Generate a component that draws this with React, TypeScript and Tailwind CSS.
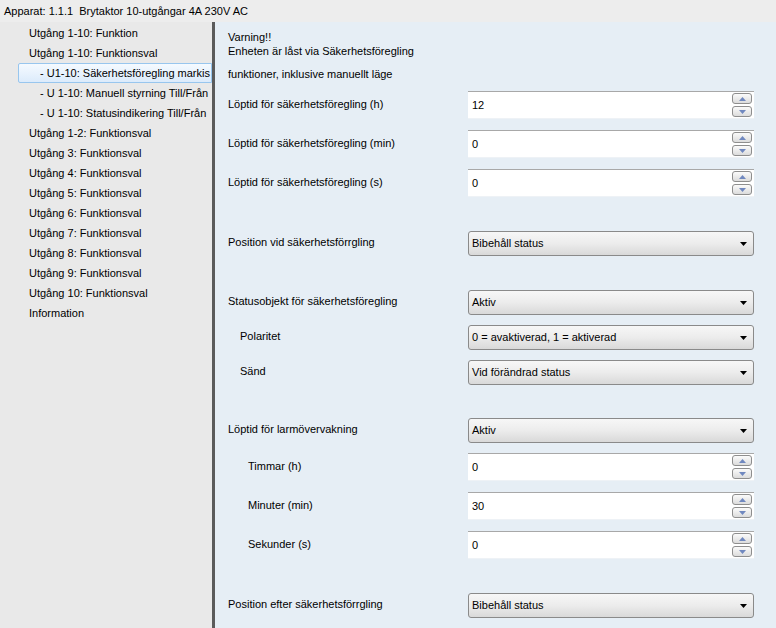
import React from "react";

const font = { fontFamily: '"Liberation Sans", Arial, sans-serif' };

function Spinner() {
  return (
    <div className="flex flex-col gap-[2px] mr-[1px]">
      {[0, 1].map((i) => (
        <div
          key={i}
          className="w-[20px] h-[11px] rounded-[3px] border border-[#8e8e8e] bg-gradient-to-b from-[#fbfbfb] to-[#dcdcdc] flex items-center justify-center"
        >
          <svg width="7" height="4" viewBox="0 0 7 4">
            {i === 0 ? (
              <polygon points="0,4 7,4 3.5,0" fill="#7088bf" />
            ) : (
              <polygon points="0,0 7,0 3.5,4" fill="#7088bf" />
            )}
          </svg>
        </div>
      ))}
    </div>
  );
}

function NumInput({ value }: { value: string }) {
  return (
    <div className="w-[286px] h-[28px] bg-white border-t border-t-[#a8a8a8] border-b border-b-[#eef2f6] flex items-center justify-between pl-[4px] pr-[1px]">
      <span className="text-[11px] text-black pt-[1px]">{value}</span>
      <Spinner />
    </div>
  );
}

function Select({ value }: { value: string }) {
  return (
    <div className="w-[286px] h-[25px] rounded-[3px] border border-[#8a8a8a] bg-gradient-to-b from-[#f7f7f7] via-[#ececec] to-[#d9d9d9] flex items-center justify-between pl-[3px] pr-[6px]">
      <span className="text-[11px] text-black">{value}</span>
      <svg width="7" height="4" viewBox="0 0 7 4">
        <polygon points="0,0 7,0 3.5,4" fill="#000" />
      </svg>
    </div>
  );
}

function Row({
  label,
  indent,
  children,
  mt,
}: {
  label: string;
  indent: string;
  children: React.ReactNode;
  mt: string;
}) {
  return (
    <div className={`flex items-center justify-between pr-[22px] ${mt}`}>
      <span className={`text-[11px] text-black pb-[2px] ${indent}`}>{label}</span>
      {children}
    </div>
  );
}

const treeItems: { text: string; sub?: boolean; selected?: boolean }[] = [
  { text: "Utgång 1-10: Funktion" },
  { text: "Utgång 1-10: Funktionsval" },
  { text: "- U1-10: Säkerhetsföregling markis", sub: true, selected: true },
  { text: "- U 1-10: Manuell styrning Till/Från", sub: true },
  { text: "- U 1-10: Statusindikering Till/Från", sub: true },
  { text: "Utgång 1-2: Funktionsval" },
  { text: "Utgång 3: Funktionsval" },
  { text: "Utgång 4: Funktionsval" },
  { text: "Utgång 5: Funktionsval" },
  { text: "Utgång 6: Funktionsval" },
  { text: "Utgång 7: Funktionsval" },
  { text: "Utgång 8: Funktionsval" },
  { text: "Utgång 9: Funktionsval" },
  { text: "Utgång 10: Funktionsval" },
  { text: "Information" },
];

export default function App() {
  return (
    <div
      className="w-[776px] h-[628px] overflow-hidden flex flex-col bg-[#ececec] text-black"
      style={font}
    >
      <div className="h-[22px] flex items-center pl-[4px] shrink-0 bg-[#ededed]">
        <span className="text-[11px] whitespace-pre">
          Apparat: 1.1.1  Brytaktor 10-utgångar 4A 230V AC
        </span>
      </div>
      <div className="flex flex-1 min-h-0">
        <div className="w-[212px] shrink-0 bg-[#e9e9e9] pt-[1px] overflow-hidden">
          {treeItems.map((it, i) =>
            it.selected ? (
              <div
                key={i}
                className="ml-[18px] h-[20px] flex items-center border border-[#98c6ee] rounded-l-[2px] bg-gradient-to-b from-[#f5faff] to-[#dcebfb] pl-[21px] overflow-hidden whitespace-nowrap"
              >
                <span className="text-[11px]">{it.text}</span>
              </div>
            ) : (
              <div
                key={i}
                className={`h-[20px] flex items-center overflow-hidden whitespace-nowrap ${
                  it.sub ? "pl-[40px]" : "pl-[29px]"
                }`}
              >
                <span className="text-[11px]">{it.text}</span>
              </div>
            )
          )}
        </div>
        <div className="w-[3px] shrink-0 bg-[#5b5b5b]" />
        <div className="flex-1 bg-[#e6eef5] pl-[13px] pt-[8px] flex flex-col">
          <div className="text-[11px] leading-[14px]">Varning!!</div>
          <div className="text-[11px] leading-[14px]">
            Enheten är låst via Säkerhetsföregling
          </div>
          <div className="text-[11px] leading-[14px] mt-[9px]">
            funktioner, inklusive manuellt läge
          </div>

          <Row label="Löptid för säkerhetsföregling (h)" indent="" mt="mt-[10px]">
            <NumInput value="12" />
          </Row>
          <Row label="Löptid för säkerhetsföregling (min)" indent="" mt="mt-[11px]">
            <NumInput value="0" />
          </Row>
          <Row label="Löptid för säkerhetsföregling (s)" indent="" mt="mt-[11px]">
            <NumInput value="0" />
          </Row>
          <Row label="Position vid säkerhetsförrgling" indent="" mt="mt-[34px]">
            <Select value="Bibehåll status" />
          </Row>
          <Row label="Statusobjekt för säkerhetsföregling" indent="" mt="mt-[34px]">
            <Select value="Aktiv" />
          </Row>
          <Row label="Polaritet" indent="pl-[12px]" mt="mt-[10px]">
            <Select value="0 = avaktiverad, 1 = aktiverad" />
          </Row>
          <Row label="Sänd" indent="pl-[12px]" mt="mt-[10px]">
            <Select value="Vid förändrad status" />
          </Row>
          <Row label="Löptid för larmövervakning" indent="" mt="mt-[33px]">
            <Select value="Aktiv" />
          </Row>
          <Row label="Timmar (h)" indent="pl-[20px]" mt="mt-[10px]">
            <NumInput value="0" />
          </Row>
          <Row label="Minuter (min)" indent="pl-[20px]" mt="mt-[11px]">
            <NumInput value="30" />
          </Row>
          <Row label="Sekunder (s)" indent="pl-[20px]" mt="mt-[11px]">
            <NumInput value="0" />
          </Row>
          <Row label="Position efter säkerhetsförrgling" indent="" mt="mt-[34px]">
            <Select value="Bibehåll status" />
          </Row>
        </div>
      </div>
    </div>
  );
}
